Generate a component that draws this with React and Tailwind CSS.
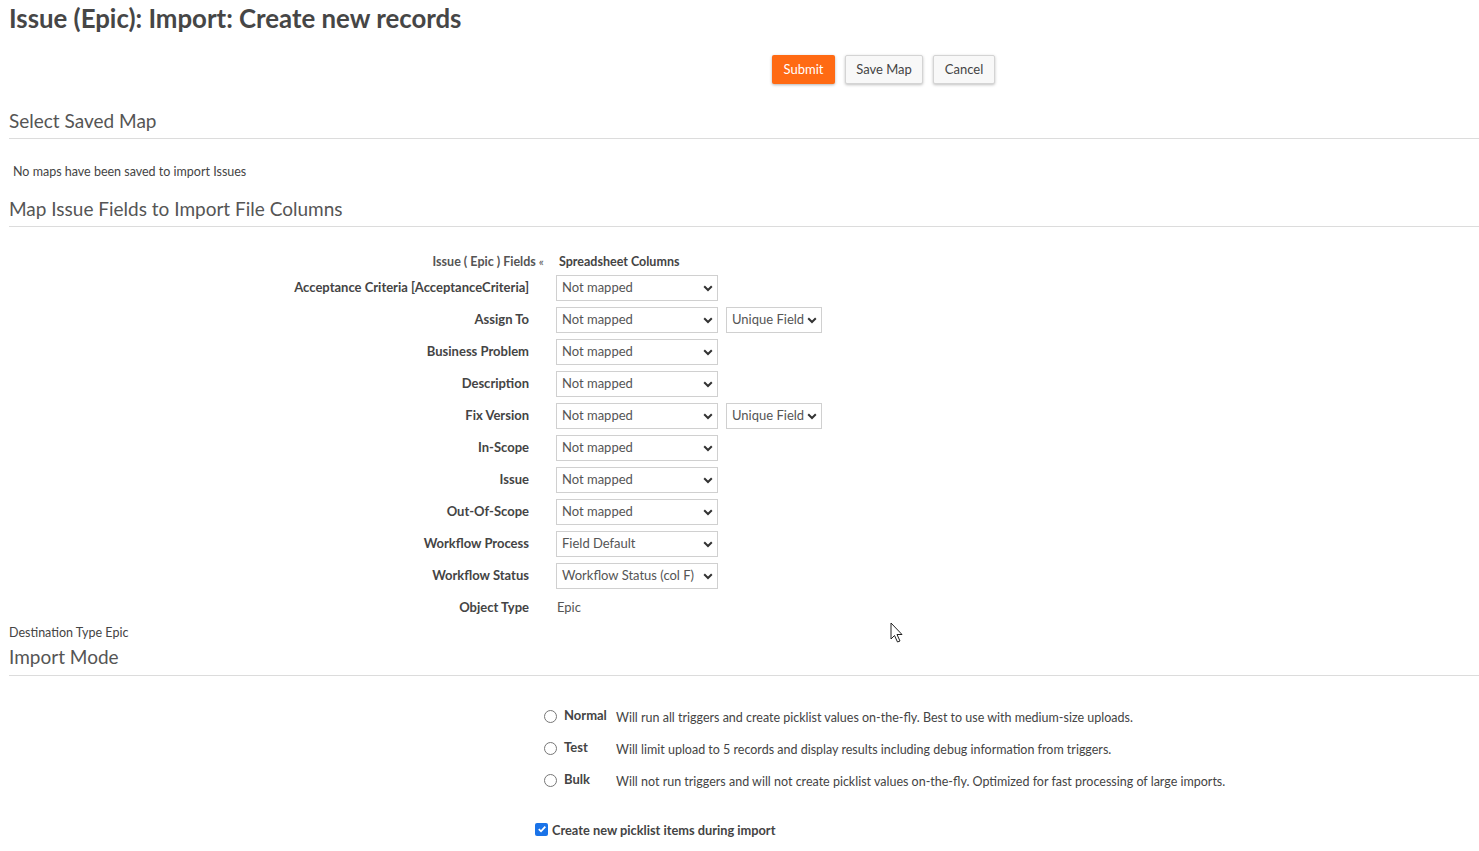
import React from "react";

const font = { fontFamily: "Lato, 'Open Sans', sans-serif" };

function Chevron() {
  return (
    <svg width="10" height="7" viewBox="0 0 10 7" className="shrink-0">
      <path d="M1.2 1.3 L5 5 L8.8 1.3" fill="none" stroke="#333" strokeWidth="2" />
    </svg>
  );
}

function Select({ value, w = "w-[162px]" }) {
  return (
    <div className={`${w} h-[26px] border border-[#d0d0d0] bg-white flex items-center justify-between pl-[5px] pr-[4px] text-[13px] text-[#555]`}>
      <span className="whitespace-nowrap">{value}</span>
      <Chevron />
    </div>
  );
}

const rows = [
  ["Acceptance Criteria [AcceptanceCriteria]", "Not mapped", false],
  ["Assign To", "Not mapped", true],
  ["Business Problem", "Not mapped", false],
  ["Description", "Not mapped", false],
  ["Fix Version", "Not mapped", true],
  ["In-Scope", "Not mapped", false],
  ["Issue", "Not mapped", false],
  ["Out-Of-Scope", "Not mapped", false],
  ["Workflow Process", "Field Default", false],
  ["Workflow Status", "Workflow Status (col F)", false],
];

const modes = [
  ["Normal", "Will run all triggers and create picklist values on-the-fly. Best to use with medium-size uploads."],
  ["Test", "Will limit upload to 5 records and display results including debug information from triggers."],
  ["Bulk", "Will not run triggers and will not create picklist values on-the-fly. Optimized for fast processing of large imports."],
];

export default function App() {
  return (
    <div className="relative w-[1479px] h-[851px] bg-white overflow-hidden pl-[9px]" style={font}>
      <h1 className="h-[36px] leading-[36px] text-[25.8px] font-bold text-[#464646] whitespace-nowrap">
        Issue (Epic): Import: Create new records
      </h1>

      <div className="mt-[19px] flex gap-[10px] pl-[763px]">
        <button className="h-[29px] w-[63px] bg-[#ff6a13] text-white text-[13px] rounded-[2px] shadow-[0_1px_3px_rgba(0,0,0,0.3)]">
          Submit
        </button>
        <button className="h-[29px] w-[78px] bg-[#f8f8f8] border border-[#d4d4d4] text-[#444] text-[13px] rounded-[2px] shadow-[0_1px_3px_rgba(0,0,0,0.25)]">
          Save Map
        </button>
        <button className="h-[29px] w-[62px] bg-[#f8f8f8] border border-[#d4d4d4] text-[#444] text-[13px] rounded-[2px] shadow-[0_1px_3px_rgba(0,0,0,0.25)]">
          Cancel
        </button>
      </div>

      <h2 className="mt-[25px] leading-[24px] pb-[5px] text-[19px] text-[#555] border-b border-[#dcdcdc]">
        Select Saved Map
      </h2>

      <p className="mt-[25px] pl-[4px] h-[16px] leading-[16px] text-[12.5px] text-[#444]">
        No maps have been saved to import Issues
      </p>

      <h2 className="mt-[17px] leading-[24px] pb-[5px] text-[19px] text-[#555] border-b border-[#dcdcdc]">
        Map Issue Fields to Import File Columns
      </h2>

      <div className="mt-[25px] grid grid-cols-[536px_auto] gap-x-[11px]">
        <div className="h-[20px] leading-[20px] text-right text-[12.5px] font-bold text-[#555] pr-[1px]">
          Issue ( Epic ) Fields <span className="font-normal text-[12px]">«</span>
        </div>
        <div className="h-[20px] leading-[20px] pl-[3px] text-[12.5px] font-bold text-[#444]">Spreadsheet Columns</div>

        {rows.map(([label, val, uniq]) => (
          <React.Fragment key={label}>
            <div className="h-[32px] flex items-center justify-end pr-[16px] text-[13px] font-bold text-[#444] whitespace-nowrap">
              {label}
            </div>
            <div className="h-[32px] flex items-center gap-[8px]">
              <Select value={val} />
              {uniq && <Select value="Unique Field" w="w-[96px]" />}
            </div>
          </React.Fragment>
        ))}
        <div className="h-[32px] flex items-center justify-end pr-[16px] text-[13px] font-bold text-[#444]">Object Type</div>
        <div className="h-[32px] flex items-center pl-[1px] text-[13px] text-[#555]">Epic</div>
      </div>

      <p className="mt-[1px] h-[16px] leading-[16px] text-[12.5px] text-[#444]">Destination Type Epic</p>

      <h2 className="mt-[4px] leading-[24px] pb-[6px] text-[19px] text-[#555] border-b border-[#dcdcdc]">Import Mode</h2>

      <div className="mt-[26px] pl-[535px] flex flex-col">
        {modes.map(([name, desc]) => (
          <div key={name} className="h-[32px] flex items-center">
            <span className="w-[13px] h-[13px] rounded-full border border-[#777] bg-white shrink-0 -mt-[4px]" />
            <span className="w-[59px] pl-[7px] text-[13px] font-bold text-[#444] -mt-[4px]">{name}</span>
            <span className="text-[12.5px] text-[#444]">{desc}</span>
          </div>
        ))}
      </div>

      <div className="mt-[23px] pl-[526px] flex items-center h-[20px]">
        <span className="w-[13px] h-[13px] rounded-[2px] bg-[#1a73e8] flex items-center justify-center -mt-[4px]">
          <svg width="10" height="10" viewBox="0 0 10 10">
            <path d="M1.8 5.2 L4 7.3 L8.3 2.6" fill="none" stroke="white" strokeWidth="1.8" />
          </svg>
        </span>
        <span className="pl-[4px] text-[12.8px] font-bold text-[#444]">Create new picklist items during import</span>
      </div>

      <svg className="absolute left-[890px] top-[622px]" width="14" height="22" viewBox="0 0 14 22">
        <path d="M1 1 L1 17 L4.5 13.5 L7.5 20 L10 19 L7 12.5 L12 12.5 Z" fill="white" stroke="#222" strokeWidth="1" strokeLinejoin="round" />
      </svg>
    </div>
  );
}
